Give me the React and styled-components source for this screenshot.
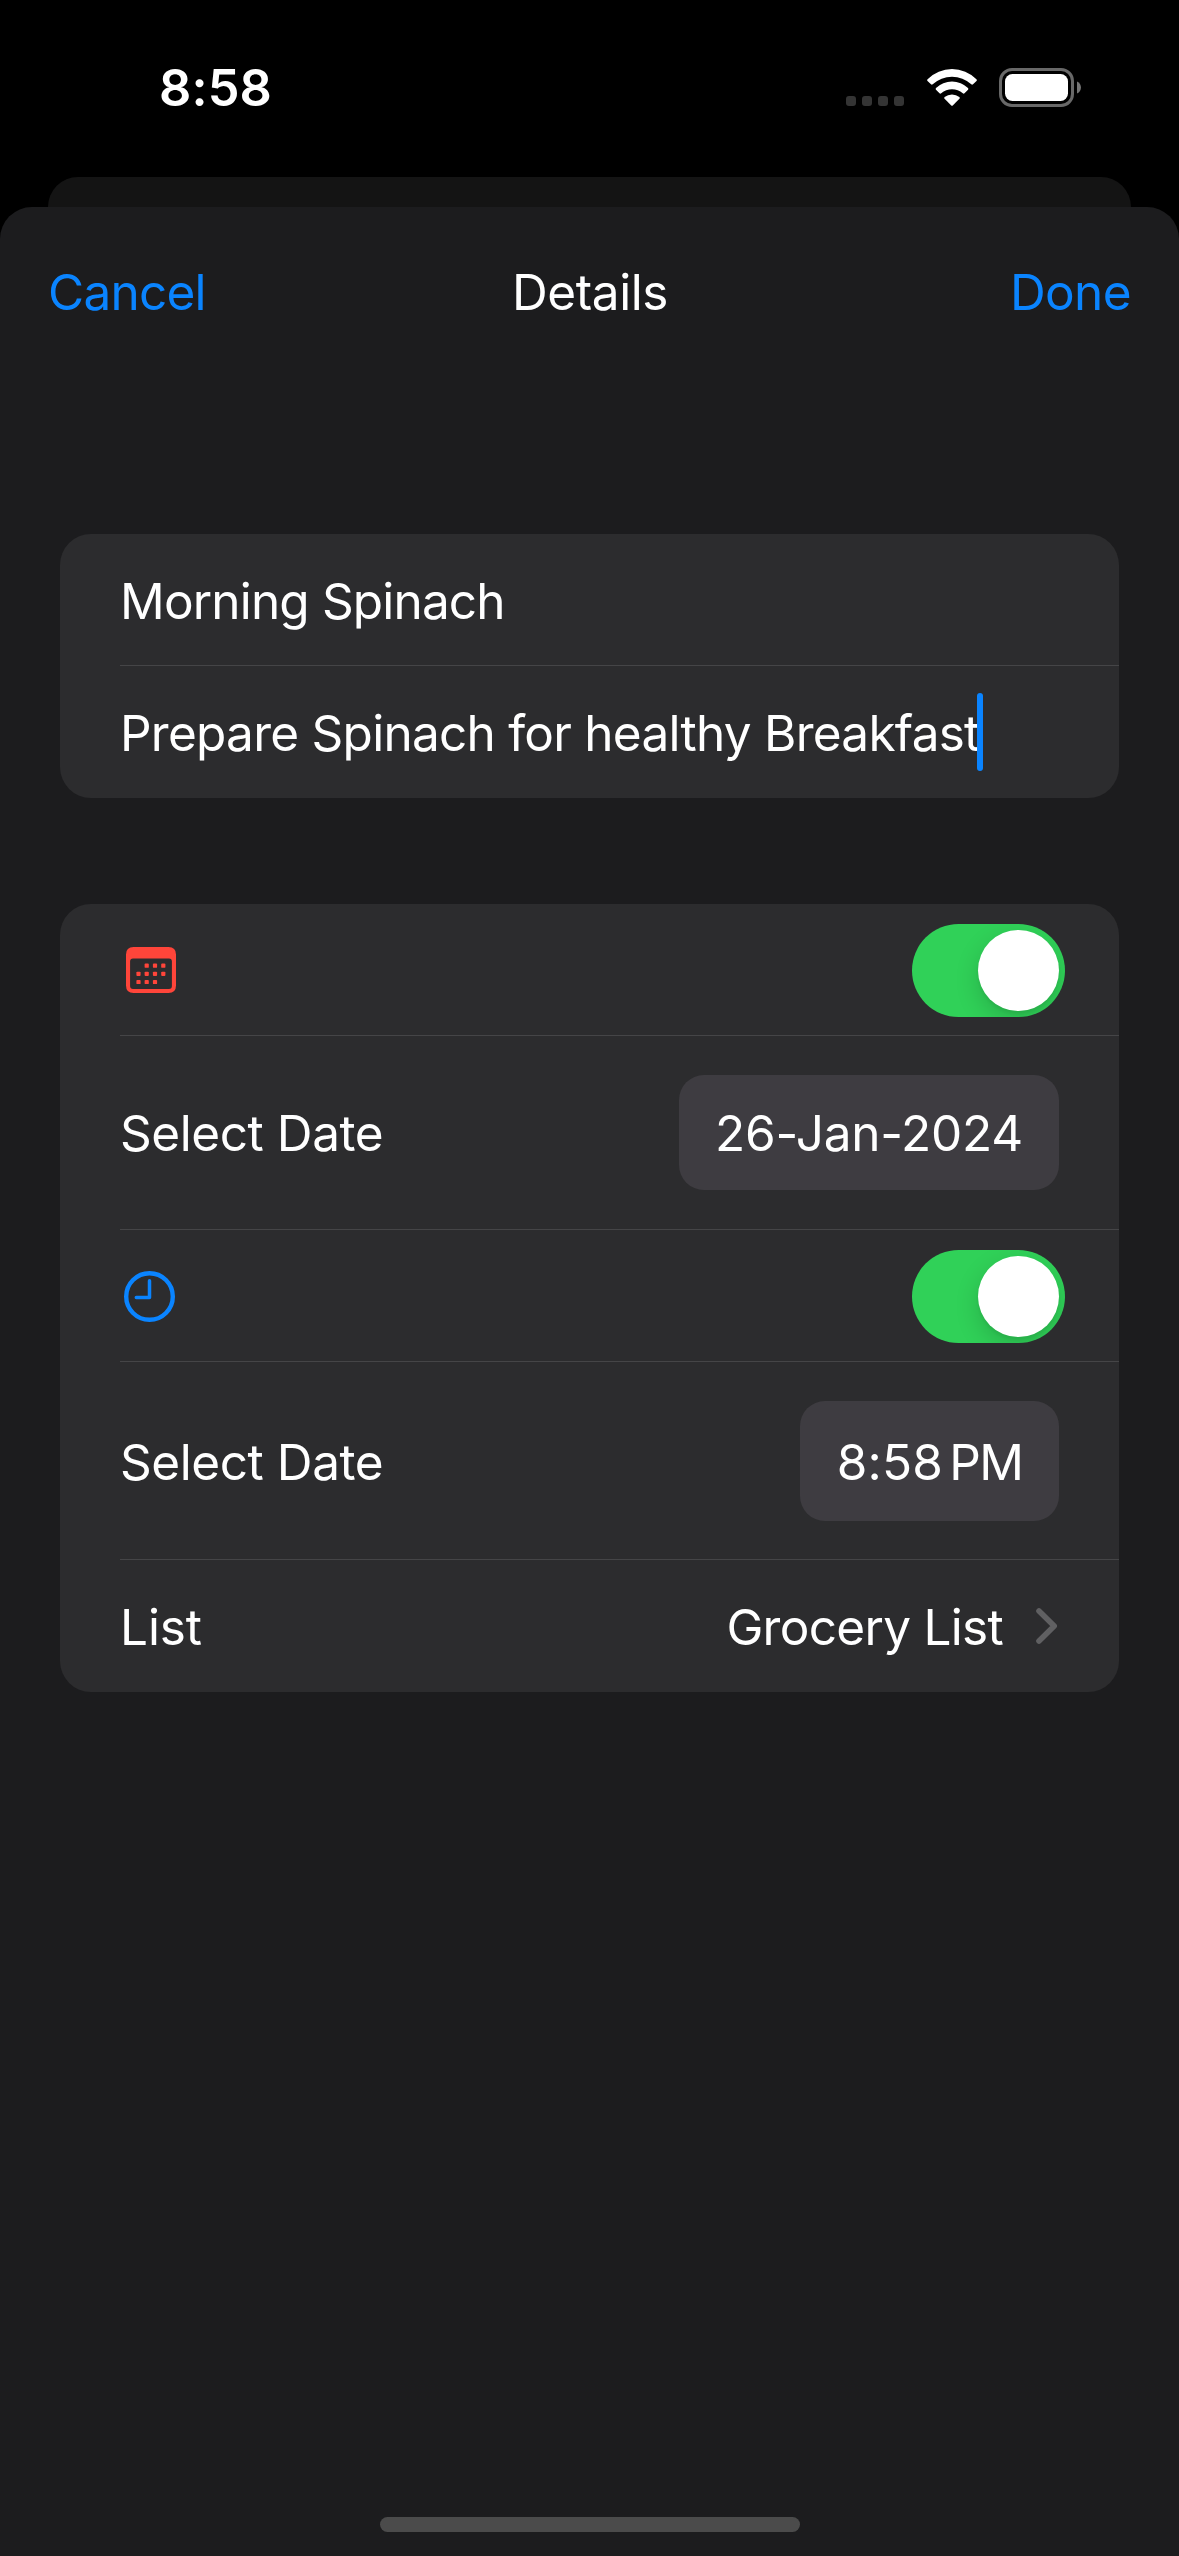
import React from "react";
import styled, { createGlobalStyle } from "styled-components";

const GlobalStyle = createGlobalStyle`
  *, *::before, *::after { box-sizing: border-box; }
  html, body { margin: 0; padding: 0; background: #000; }
  body { font-family: Inter, "Liberation Sans", sans-serif; }
  button { margin: 0; padding: 0; border: 0; background: none; font: inherit; color: inherit; }
  svg { display: block; }
`;

const Screen = styled.div`
  width: 1179px;
  height: 2556px;
  display: flex;
  flex-direction: column;
  overflow: hidden;
  background: #000;
  color: #fff;
  font-size: 49.5px;
  line-height: 60px;
  white-space: nowrap;
`;

const StatusBar = styled.header`
  flex: none;
  height: 177px;
  padding: 0 98px 0 159px;
  display: flex;
  align-items: flex-start;
  justify-content: space-between;
`;

const Clock = styled.time`
  padding-top: 58px;
  font-size: 50.5px;
  font-weight: 600;
  letter-spacing: ${(p) => p.$track}px;
`;

const StatusIcons = styled.div`
  display: flex;
  align-items: flex-start;
  padding-top: 68px;
`;

const SignalDots = styled.div`
  display: flex;
  gap: 6px;
  padding-top: 28px;
  margin-right: 23px;
`;

const SignalDot = styled.span`
  width: 10px;
  height: 10px;
  border-radius: 3px;
  background: #343434;
`;

const WifiIcon = styled.svg`
  width: 50px;
  height: 37px;
  margin: 1px 22px 0 0;
`;

const BackSheet = styled.div`
  flex: none;
  height: 30px;
  margin: 0 48px;
  border-radius: 30px 30px 0 0;
  background: #141414;
`;

const Sheet = styled.main`
  flex: 1;
  display: flex;
  flex-direction: column;
  border-radius: 32px 32px 0 0;
  background: #1c1c1e;
`;

const NavBar = styled.nav`
  flex: none;
  display: grid;
  grid-template-columns: 1fr auto 1fr;
  height: 168px;
  padding: 55px 48px 0 48px;
  align-items: start;
`;

const NavButton = styled.button`
  justify-self: ${(p) => p.$side};
  color: #0a84ff;
  letter-spacing: ${(p) => p.$track}px;
`;

const NavTitle = styled.h1`
  margin: 0;
  padding-left: 1px;
  font: inherit;
  letter-spacing: ${(p) => p.$track}px;
`;

const Form = styled.div`
  flex: 1;
  display: flex;
  flex-direction: column;
  gap: 106px;
  padding: 159px 60px 0;
`;

const Card = styled.section`
  border-radius: 31px;
  background: #2c2c2e;
  padding-left: 60px;
  overflow: hidden;
`;

const Row = styled.div`
  display: flex;
  align-items: center;
  justify-content: space-between;
  height: ${(p) => p.$height || 132}px;
  padding-right: 60px;
  border-bottom: 1px solid #454547;

  &:last-child { border-bottom-color: transparent; }
`;

const ToggleRow = styled(Row)`
  padding-top: 2px;
  padding-right: 54px;
`;

const Label = styled.span`
  padding-top: ${(p) => p.$drop ?? 2}px;
  letter-spacing: ${(p) => p.$track}px;
`;

const Field = styled.div`
  display: flex;
  align-items: center;
`;

const Caret = styled.span`
  width: 6px;
  height: 78px;
  margin-left: -3px;
  border-radius: 3px;
  background: #0a84ff;
`;

const Pill = styled.button`
  display: flex;
  align-items: center;
  justify-content: center;
  width: ${(p) => p.$width}px;
  height: ${(p) => p.$height}px;
  border-radius: 25px;
  background: #3e3c41;
  letter-spacing: ${(p) => p.$track}px;
  padding-top: ${(p) => p.$drop ?? 2}px;
`;

const PillText = styled.span`
  word-spacing: -8px;
`;

const Meridiem = styled.span`
  letter-spacing: -1.6px;
`;

const Switch = styled.button`
  display: flex;
  justify-content: flex-end;
  width: 153px;
  height: 93px;
  padding: 6px;
  border-radius: 47px;
  background: #30d158;
  overflow: hidden;
`;

const Knob = styled.span`
  width: 81px;
  height: 81px;
  border-radius: 50%;
  background: #fff;
  box-shadow: 0 9px 24px rgba(0, 0, 0, 0.16), 0 3px 3px rgba(0, 0, 0, 0.05);
`;

const Value = styled.div`
  display: flex;
  align-items: center;
  gap: 33px;
`;

const RowIcon = styled.svg`
  width: ${(p) => p.width}px;
  height: ${(p) => p.height}px;
  margin: 0 0 ${(p) => p.$lift || 0}px ${(p) => p.$inset}px;
`;

const HomeArea = styled.footer`
  flex: none;
  display: flex;
  justify-content: center;
  padding: 0 0 24px 1px;
`;

const HomeIndicator = styled.span`
  width: 420px;
  height: 15px;
  border-radius: 8px;
  background: #4b4b4b;
`;

function Wifi() {
  return (
    <WifiIcon viewBox="0 0 50 37" fill="#fff">
      <path d="M.6 10.2A34.5 34.5 0 0 1 49.4 10.2Q50.3 11 49.5 12L46 15.2Q45.2 16 44.3 15.3A28.6 28.6 0 0 0 5.7 15.3Q4.8 16 4 15.2L.5 12Q-.3 11 .6 10.2Z" />
      <path d="M9 19A23 23 0 0 1 41 19Q41.8 19.9 41 20.8L37.5 24.2Q36.7 25 35.8 24.3A16.8 16.8 0 0 0 14.2 24.3Q13.3 25 12.5 24.2L9 20.8Q8.2 19.9 9 19Z" />
      <path d="M17.6 28A12 12 0 0 1 32.4 28Q33.1 28.9 32.4 29.7L26 36.3Q25 37.3 24 36.3L17.6 29.7Q16.9 28.9 17.6 28Z" />
    </WifiIcon>
  );
}

function Battery() {
  return (
    <svg width="82" height="39" viewBox="0 0 82 39">
      <rect x="1.5" y="1.5" width="72" height="36" rx="11.5" fill="none" stroke="#686868" strokeWidth="3" />
      <rect x="6" y="6" width="63" height="27" rx="7.5" fill="#fff" />
      <path d="M78 13.5C83.3 15.5 83.3 23.5 78 25.5Z" fill="#757575" />
    </svg>
  );
}

const CALENDAR_DOTS = [
  [20.7, 18.7], [29, 18.7], [37.3, 18.7],
  [12.5, 26.8], [20.7, 26.8], [29, 26.8], [37.3, 26.8],
  [12.5, 35], [20.7, 35], [29, 35],
];

function CalendarIcon() {
  return (
    <RowIcon width={50} height={46} $inset={6} $lift={1} viewBox="0 0 50 46" fill="#ff453a">
      <path
        fillRule="evenodd"
        d="M7.5 0H42.5Q50 0 50 7.5V38.5Q50 46 42.5 46H7.5Q0 46 0 38.5V7.5Q0 0 7.5 0ZM7 11.4Q4.1 11.4 4.1 14.3V39Q4.1 42 7 42H43Q45.9 42 45.9 39V14.3Q45.9 11.4 43 11.4Z"
      />
      {CALENDAR_DOTS.map(([x, y]) => (
        <rect key={`${x}-${y}`} x={x - 2.1} y={y - 2.1} width="4.2" height="4.2" rx="0.9" />
      ))}
    </RowIcon>
  );
}

function ClockIcon() {
  return (
    <RowIcon width={51} height={51} $inset={4} viewBox="0 0 51 51" fill="none" stroke="#0a84ff">
      <circle cx="25.5" cy="25.5" r="23.3" strokeWidth="4.4" />
      <path d="M25.5 9.7V26.4H12.3" strokeWidth="3.5" strokeLinecap="round" strokeLinejoin="round" />
    </RowIcon>
  );
}

function Chevron() {
  return (
    <svg width="23" height="38" viewBox="0 0 23 38" fill="none">
      <path d="M3 4L18.2 19L3 34" stroke="#606062" strokeWidth="5.6" strokeLinecap="round" strokeLinejoin="round" />
    </svg>
  );
}

function Toggle() {
  return (
    <Switch role="switch" aria-checked="true">
      <Knob />
    </Switch>
  );
}

export default function App() {
  return (
    <>
      <GlobalStyle />
      <Screen>
        <StatusBar>
          <Clock $track={0.1}>8:58</Clock>
          <StatusIcons>
            <SignalDots>
              <SignalDot />
              <SignalDot />
              <SignalDot />
              <SignalDot />
            </SignalDots>
            <Wifi />
            <Battery />
          </StatusIcons>
        </StatusBar>
        <BackSheet />
        <Sheet>
          <NavBar>
            <NavButton $side="start" $track={-0.75}>Cancel</NavButton>
            <NavTitle $track={-0.4}>Details</NavTitle>
            <NavButton $side="end" $track={-0.6}>Done</NavButton>
          </NavBar>
          <Form>
            <Card>
              <Row>
                <Label $track={-0.83}>Morning Spinach</Label>
              </Row>
              <Row>
                <Field>
                  <Label $track={-0.74}>Prepare Spinach for healthy Breakfast</Label>
                  <Caret />
                </Field>
              </Row>
            </Card>
            <Card>
              <ToggleRow>
                <CalendarIcon />
                <Toggle />
              </ToggleRow>
              <Row $height={194}>
                <Label $track={-0.43} $drop={0}>Select Date</Label>
                <Pill $width={380} $height={115} $track={-0.25} $drop={0}>26-Jan-2024</Pill>
              </Row>
              <ToggleRow>
                <ClockIcon />
                <Toggle />
              </ToggleRow>
              <Row $height={198}>
                <Label $track={-0.43}>Select Date</Label>
                <Pill $width={259} $height={120} $track={0.2}>
                  <PillText>
                    8:58 <Meridiem>PM</Meridiem>
                  </PillText>
                </Pill>
              </Row>
              <Row>
                <Label $track={-0.1}>List</Label>
                <Value>
                  <Label $track={-0.7}>Grocery List</Label>
                  <Chevron />
                </Value>
              </Row>
            </Card>
          </Form>
          <HomeArea>
            <HomeIndicator />
          </HomeArea>
        </Sheet>
      </Screen>
    </>
  );
}
